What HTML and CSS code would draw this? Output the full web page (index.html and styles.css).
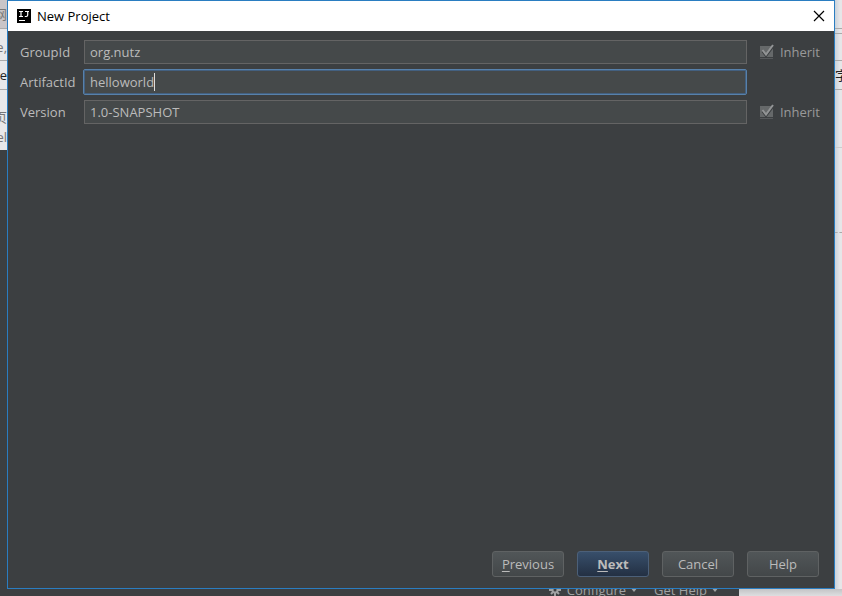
FILE: index.html
```html
<!DOCTYPE html>
<html lang="en">
<head>
<meta charset="utf-8">
<title>New Project</title>
<link rel="stylesheet" href="styles.css">
</head>
<body>
<div class="desktop">
  <aside class="behind-left">
    <div class="strip tab">网</div>
    <div class="strip address">e,</div>
    <div class="strip bookmarks">ve</div>
    <div class="strip page">页</div>
    <div class="strip page-end">el</div>
    <div class="launcher-edge"></div>
  </aside>

  <main class="dialog">
    <header class="titlebar">
      <svg class="logo" viewBox="0 0 14 14" aria-hidden="true">
        <rect width="14" height="14" fill="#000"/>
        <path d="M2 2.5h4M4 2.5v5M2 7.5h4M8 2.5h4M10.7 2.5v3.6q0 1.4-1.4 1.4H7.8M2 11.5h6" fill="none" stroke="#fff" stroke-width="1.2"/>
      </svg>
      <h1>New Project</h1>
      <button class="close" type="button" aria-label="Close">
        <svg viewBox="0 0 12 12" aria-hidden="true"><path d="M1 1l10 10M11 1L1 11" fill="none" stroke="#000" stroke-width="1.2"/></svg>
      </button>
    </header>

    <form class="content">
      <div class="fields">
        <label for="group">GroupId</label>
        <input class="text" id="group" type="text" value="org.nutz">
        <label class="inherit"><input type="checkbox" checked disabled><svg class="tick" viewBox="0 0 16 16" aria-hidden="true"><path class="box" d="M1 2h13v11H1z"/><path class="base" d="M1 14.5h13"/><path class="shade" d="M3.5 7.500l3.500 4.500L14 3"/><path class="mark" d="M3.500 6l3.500 4.500L14 1"/></svg>Inherit</label>

        <label for="artifact">ArtifactId</label>
        <div class="text focused"><input id="artifact" type="text" value="helloworld" size="1"><i class="caret"></i></div>
        <span></span>

        <label for="version">Version</label>
        <input class="text" id="version" type="text" value="1.0-SNAPSHOT">
        <label class="inherit"><input type="checkbox" checked disabled><svg class="tick" viewBox="0 0 16 16" aria-hidden="true"><path class="box" d="M1 2h13v11H1z"/><path class="base" d="M1 14.5h13"/><path class="shade" d="M3.5 7.500l3.500 4.500L14 3"/><path class="mark" d="M3.500 6l3.500 4.500L14 1"/></svg>Inherit</label>
      </div>

      <div class="actions">
        <button type="button"><u>P</u>revious</button>
        <button type="button" class="primary"><u>N</u>ext</button>
        <button type="button">Cancel</button>
        <button type="button">Help</button>
      </div>
    </form>
  </main>

  <aside class="behind-right">
    <div class="strip tab"></div>
    <div class="strip address"></div>
    <div class="strip bookmarks">字</div>
    <div class="panel"></div>
    <div class="panel dashed"></div>
  </aside>

  <footer class="behind-bottom">
    <div class="launcher">
      <svg class="gear" viewBox="0 0 12 12" aria-hidden="true"><path d="M6 0v12M0 6h12M2 2l8 8M10 2l-8 8" stroke="#a0a2a3" stroke-width="2"/><circle cx="6" cy="6" r="3.5" fill="#a0a2a3"/><circle cx="6" cy="6" r="1.5" fill="#3c3f41"/></svg>
      <span>Configure</span><i class="arrow"></i>
      <span class="help">Get Help</span><i class="arrow"></i>
    </div>
  </footer>
</div>
</body>
</html>
```
FILE: styles.css
```css
* { box-sizing: border-box; }

body {
  margin: 0;
  font: 13px/18px "Open Sans", "Noto Sans CJK SC", sans-serif;
  color: #bbb;
  background: #e9e9eb;
}

.desktop {
  display: grid;
  grid-template-columns: 7px minmax(0, 1fr) 7px;
  grid-template-rows: minmax(0, 1fr) 7px;
  height: 100vh;
  overflow: hidden;
}

/* windows visible around the dialog */
.behind-left, .behind-right {
  display: flex;
  flex-direction: column;
  overflow: hidden;
  color: #777;
}
.behind-left { grid-row: 1 / 3; background: #e8e8ea; }
.behind-right { background: linear-gradient(90deg, #c9d2db, #e6e6e8 5px); }
.strip {
  display: flex;
  align-items: center;
  flex: none;
  overflow: hidden;
}
.behind-left .strip { justify-content: flex-end; }
.tab { height: 29px; border-bottom: 1px solid #aaa; }
.behind-left .tab { background: #c9c5c8; }
.address { height: 32px; border-bottom: 1px solid #aaa; }
.behind-left .address { padding-top: 4px; }
.behind-right .address { border-top: 1px solid #aaa; margin-top: 4px; height: 28px; }
.bookmarks { height: 29px; border-bottom: 1px solid #aaa; color: #222; }
.page { height: 38px; padding-top: 16px; }
.page-end { height: 22px; padding-bottom: 4px; }
.launcher-edge { flex: 1; background: #3c3f41; }
.panel { height: 58px; border-bottom: 1px solid #ccc; }
.dashed { height: 85px; border-bottom: 1px dashed #aaa; }

.behind-bottom {
  grid-column: 2 / 4;
  overflow: hidden;
  background: linear-gradient(#c4c4c6, #dedee0);
}
.launcher {
  display: flex;
  align-items: center;
  justify-content: flex-end;
  width: 732px;
  height: 7px;
  padding: 0 20px 6px 0;
  background: #3c3f41;
  color: #a0a2a3;
}
.gear { width: 12px; height: 12px; margin-right: 6px; flex: none; }
.arrow {
  margin-left: 4px;
  border: 4px solid transparent;
  border-top: 5px solid #a0a2a3;
  border-bottom: 0;
}
.help { margin-left: 16px; }

/* dialog */
.dialog {
  display: flex;
  flex-direction: column;
  border: 1px solid #2a7dc1;
  background: #3c3f41;
}
.titlebar {
  display: flex;
  align-items: center;
  height: 30px;
  padding: 0 9px;
  background: #fff;
  color: #000;
}
.logo { width: 14px; height: 14px; }
h1 { flex: 1; margin: 0 0 0 6px; font-size: 13px; font-weight: 400; }
.close { display: flex; padding: 0; border: 0; background: none; }
.close svg { width: 12px; height: 12px; }

.content {
  display: flex;
  flex: 1;
  flex-direction: column;
  justify-content: space-between;
  padding: 8px 14px 11px 12px;
}
.fields {
  display: grid;
  grid-template-columns: 63px minmax(0, 1fr) 73px;
  grid-auto-rows: 26px;
  row-gap: 4px;
  align-items: center;
}
.text {
  width: 100%;
  height: 24px;
  padding: 0 6px;
  border: 1px solid #646464;
  background: #45494a;
  color: #bbb;
  font: inherit;
  outline: 0;
}
input.text { width: auto; margin-left: 1px; padding: 0 5px; }
.focused {
  display: flex;
  align-items: center;
  height: 26px;
  border: 1px solid #5781ab;
  border-radius: 2px;
  box-shadow: inset 0 0 0 1px #436080;
}
.focused input {
  field-sizing: content;
  padding: 0;
  border: 0;
  background: none;
  color: inherit;
  font: inherit;
  outline: 0;
}
.caret { width: 1px; height: 18px; background: #ddd; }
.inherit {
  display: flex;
  align-items: center;
  justify-content: flex-end;
  position: relative;
  color: #999;
}
.inherit input { position: absolute; opacity: 0; margin: 0; }
.tick { width: 16px; height: 16px; margin-right: 5px; flex: none; }
.box { fill: #66696a; }
.base { stroke: #55585a; }
.shade { fill: none; stroke: #3c3f41; stroke-width: 2; }
.mark { fill: none; stroke: #929495; stroke-width: 2; }

.actions { display: flex; justify-content: flex-end; gap: 13px; padding-right: 1px; }
.actions button {
  width: 72px;
  height: 26px;
  padding: 0;
  border: 1px solid #5f6263;
  border-radius: 3px;
  background: linear-gradient(#515658, #434749);
  color: #bbb;
  font: inherit;
}
.actions .primary {
  border-color: #4c6079;
  background: linear-gradient(#384f6b, #233043);
  font-weight: 700;
}
u { text-underline-offset: 2px; }
```
